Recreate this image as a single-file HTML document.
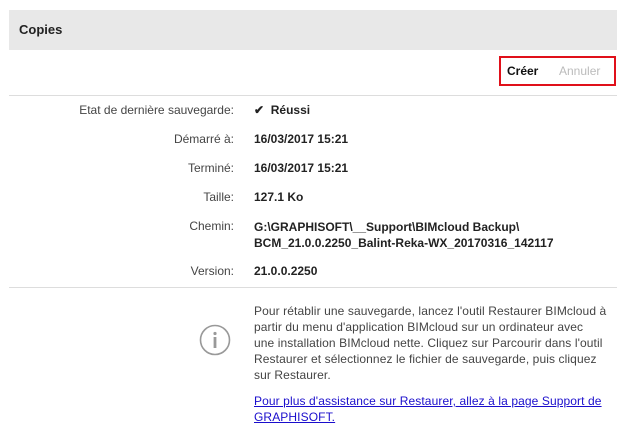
<!DOCTYPE html>
<html><head><style>
body{margin:0;width:628px;height:434px;background:#fff;font-family:"Liberation Sans",sans-serif;font-size:12px;color:#333;position:relative;overflow:hidden}
.hd{position:absolute;left:9px;top:10px;width:608px;height:40px;background:#e8e8e8}
.hd span{position:absolute;left:10px;top:12px;font-weight:bold;font-size:13px;color:#222}
.btn{position:absolute;left:499px;top:56px;width:113px;height:26px;border:2px solid #e0101a;}
.btn b{position:absolute;top:6px;font-size:12px}
.hr{position:absolute;left:9px;width:608px;height:1px;background:#ddd}
.l{position:absolute;right:394px;text-align:right;color:#444}
.v{position:absolute;left:254px;font-weight:bold;color:#222}
.p{position:absolute;left:254px;width:362px;line-height:16px;color:#444;letter-spacing:0.1px}
a{color:#1a0dcc;text-decoration:underline}
</style></head><body>
<div class="hd"><span>Copies</span></div>
<div class="btn"><b style="left:6px;color:#111">Créer</b><b style="left:58px;color:#bbb;font-weight:normal">Annuler</b></div>
<div class="hr" style="top:95px"></div>
<div class="l" style="top:103px">Etat de dernière sauvegarde:</div><div class="v" style="top:103px">✔&nbsp; Réussi</div>
<div class="l" style="top:132px">Démarré à:</div><div class="v" style="top:132px">16/03/2017 15:21</div>
<div class="l" style="top:161px">Terminé:</div><div class="v" style="top:161px">16/03/2017 15:21</div>
<div class="l" style="top:190px">Taille:</div><div class="v" style="top:190px">127.1 Ko</div>
<div class="l" style="top:219px">Chemin:</div><div class="v" style="top:219px;line-height:16px">G:\GRAPHISOFT\__Support\BIMcloud Backup\<br>BCM_21.0.0.2250_Balint-Reka-WX_20170316_142117</div>
<div class="l" style="top:264px">Version:</div><div class="v" style="top:264px">21.0.0.2250</div>
<div class="hr" style="top:287px"></div>
<svg style="position:absolute;left:199px;top:324px" width="32" height="32"><circle cx="16" cy="16" r="14.5" fill="none" stroke="#999" stroke-width="1.6"/><circle cx="16" cy="9.5" r="1.6" fill="#999"/><rect x="14.6" y="13" width="2.8" height="11" fill="#999"/></svg>
<div class="p" style="top:303px">Pour rétablir une sauvegarde, lancez l'outil Restaurer BIMcloud à partir du menu d'application BIMcloud sur un ordinateur avec<br>une installation BIMcloud nette. Cliquez sur Parcourir dans l'outil Restaurer et sélectionnez le fichier de sauvegarde, puis cliquez sur Restaurer.</div>
<div class="p" style="top:393px"><a>Pour plus d'assistance sur Restaurer, allez à la page Support de GRAPHISOFT.</a></div>
</body></html>
